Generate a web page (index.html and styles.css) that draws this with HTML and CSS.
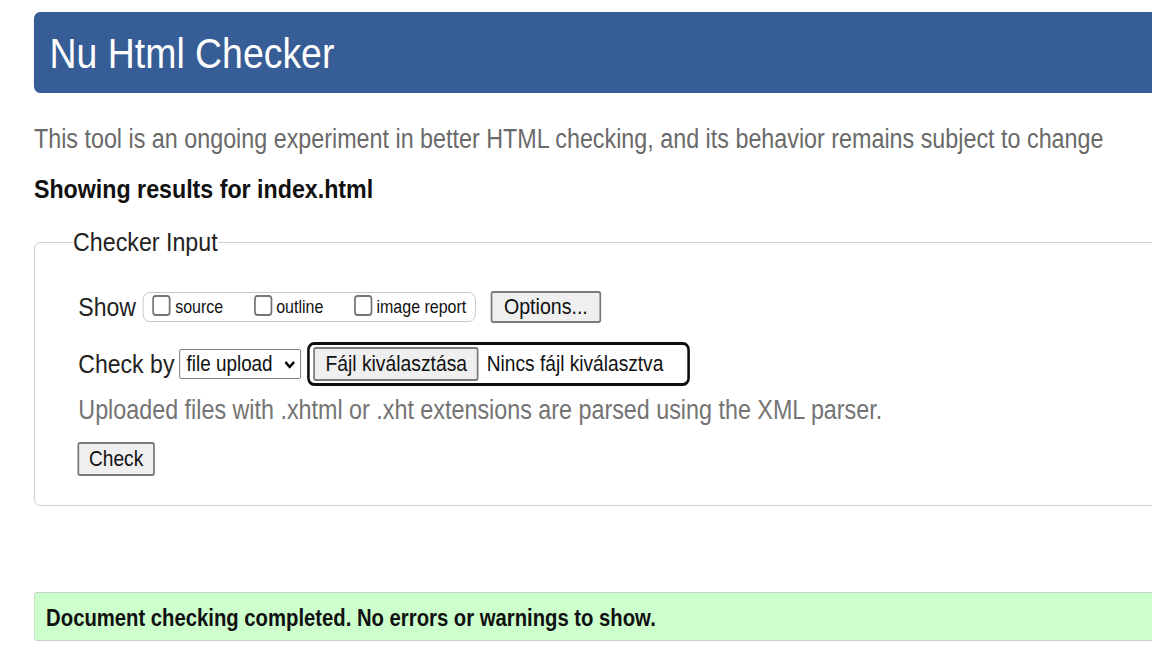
FILE: index.html
```html
<!DOCTYPE html>
<html lang="en">
<head>
<meta charset="utf-8">
<title>Nu Html Checker</title>
<link rel="stylesheet" href="styles.css">
</head>
<body>
<div class="page">
  <header class="banner"><h1 class="title">Nu Html Checker</h1></header>
  <p class="intro">This tool is an ongoing experiment in better HTML checking, and its behavior remains subject to change</p>
  <h2 class="showing">Showing results for index.html</h2>
  <fieldset class="input-box">
    <legend class="legend">Checker Input</legend>
    <div class="row show-row">
      <span class="label">Show</span>
      <span class="opts">
        <span class="opt"><span class="cb"></span>source</span>
        <span class="opt"><span class="cb"></span>outline</span>
        <span class="opt"><span class="cb"></span>image report</span>
      </span>
      <span class="btn options">Options...</span>
    </div>
    <div class="row check-row">
      <span class="label">Check by</span>
      <span class="select">file upload<svg class="chev" width="14" height="9" viewBox="0 0 14 9"><path d="M2 2 L7 7 L12 2" fill="none" stroke="#000" stroke-width="2.6"/></svg></span>
      <span class="file">
        <span class="btn file-btn">Fájl kiválasztása</span>
        <span class="file-none">Nincs fájl kiválasztva</span>
      </span>
    </div>
    <p class="help">Uploaded files with .xhtml or .xht extensions are parsed using the XML parser.</p>
    <span class="btn check">Check</span>
  </fieldset>
  <div class="success">Document checking completed. No errors or warnings to show.</div>
</div>
</body>
</html>
```

FILE: styles.css
```css
html, body {
  margin: 0;
  padding: 0;
  background: #fff;
  overflow: hidden;
}
body {
  font-family: "Liberation Sans", Arial, sans-serif;
  color: #222;
}
/* the reference is rendered horizontally condensed */
.page {
  width: 1420px;
  padding: 12px 0 0 39px;
  transform: scaleX(0.87);
  transform-origin: 0 0;
}
.banner {
  background: #365d95;
  border-radius: 7px 0 0 7px;
  height: 81px;
  display: flex;
  align-items: center;
  padding-left: 18px;
}
.title {
  margin: 0;
  font-weight: normal;
  font-size: 43px;
  color: #fff;
  line-height: 1;
  padding-top: 2px;
}
.intro {
  margin: 30px 0 0 0;
  font-size: 26.8px;
  color: #6a6a6a;
  line-height: 32px;
}
.showing {
  margin: 19px 0 0 0;
  font-size: 26.7px;
  font-weight: bold;
  color: #111;
  line-height: 30px;
}
.input-box {
  margin: 23px 0 0 0;
  border: 1px solid #cdcdcd;
  border-radius: 7px;
  padding: 0 0 29px 50px;
  min-width: 0;
}
.legend {
  font-size: 26.7px;
  padding: 0;
  margin-left: -6px;
  color: #222;
  line-height: 30px;
}
.row {
  display: flex;
  align-items: center;
}
.label {
  font-size: 26.5px;
  color: #222;
}
.show-row {
  margin-top: 34px;
  height: 32px;
}
.opts {
  display: flex;
  align-items: center;
  height: 30px;
  box-sizing: border-box;
  margin-left: 8px;
  border: 1px solid #c4c4c4;
  border-radius: 8px;
  padding: 0 10px 0 10px;
  font-size: 18.4px;
  color: #111;
}
.opt {
  display: flex;
  align-items: center;
  margin-right: 35px;
}
.opt:last-child { margin-right: 0; }
.cb {
  width: 21px;
  height: 21px;
  border: 2px solid #767676;
  border-radius: 4px;
  margin-right: 5px;
  margin-top: -4px;
  box-sizing: border-box;
  background: #fff;
}
.btn {
  display: inline-flex;
  align-items: center;
  justify-content: center;
  background: #efefef;
  border: 2px solid #7a7a7a;
  border-radius: 3px;
  box-sizing: border-box;
  font-size: 22.5px;
  color: #111;
}
.options {
  margin-left: 17px;
  width: 127px;
  height: 32px;
}
.check-row {
  margin-top: 19px;
  height: 44px;
}
.select {
  display: inline-flex;
  align-items: center;
  justify-content: space-between;
  margin-left: 6px;
  width: 140px;
  height: 30px;
  box-sizing: border-box;
  border: 1px solid #767676;
  border-radius: 2px;
  padding: 0 5px 0 7px;
  font-size: 21.7px;
  color: #111;
}
.file {
  display: inline-flex;
  align-items: center;
  margin-left: 7px;
  width: 440px;
  height: 44px;
  box-sizing: border-box;
  border: 3px solid #101010;
  border-radius: 8px;
  padding-left: 4px;
}
.file-btn {
  width: 190px;
  height: 34px;
  font-size: 22.2px;
}
.file-none {
  font-size: 22px;
  color: #111;
  margin-left: 9px;
}
.help {
  margin: 9px 0 0 0;
  font-size: 26.8px;
  color: #747474;
  line-height: 30px;
}
.check {
  margin-top: 17px;
  margin-left: -1px;
  width: 89px;
  height: 34px;
  font-size: 22px;
}
.success {
  margin-top: 86px;
  background: #ccffcc;
  border: 1px solid #c6d6c6;
  border-right: none;
  border-radius: 4px 0 0 4px;
  height: 49px;
  box-sizing: border-box;
  display: flex;
  align-items: center;
  padding: 3px 0 0 13px;
  font-size: 23.3px;
  font-weight: bold;
  color: #111;
}
```
